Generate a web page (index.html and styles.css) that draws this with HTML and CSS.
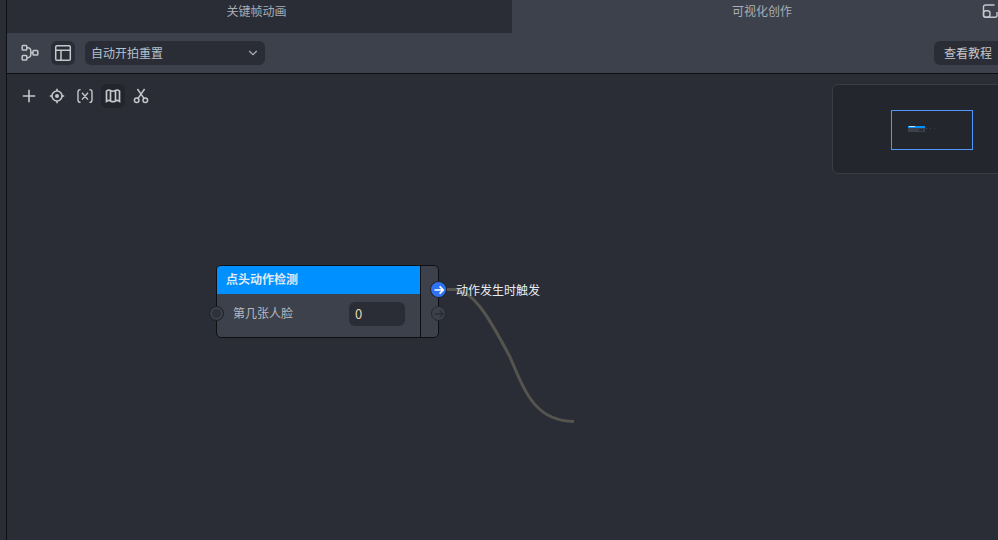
FILE: index.html
```html
<!DOCTYPE html>
<html lang="zh">
<head>
<meta charset="utf-8">
<title>可视化创作</title>
<link rel="stylesheet" href="styles.css">
</head>
<body>
<div class="app">
  <div class="strip"></div>
  <main class="main">
    <div class="tabs">
      <div class="tab tab-a">关键帧动画</div>
      <div class="tab tab-b">可视化创作</div>
      <svg class="tab-icon" width="16" height="16" viewBox="0 0 16 16" fill="none" stroke="#c4c7cc" stroke-width="1.4">
        <path d="M12.5 1H3.5A2 2 0 0 0 1.5 3V11.2A2 2 0 0 0 3.5 13.2H13A2 2 0 0 0 15 11.2V8"/>
        <rect x="1.5" y="6.8" width="6.5" height="6.4" rx="2.4"/>
      </svg>
    </div>
    <div class="toolbar">
      <div class="tool-btn">
        <svg width="18" height="18" viewBox="0 0 18 18" fill="none" stroke="#c4c7cc" stroke-width="1.5">
          <rect x="1.2" y="1.4" width="4.6" height="4.6" rx=".8"/>
          <rect x="1.2" y="11.4" width="4.6" height="4.6" rx=".8"/>
          <rect x="12" y="6.4" width="4.8" height="4.6" rx=".8"/>
          <path d="M5.8 3.7H6.8A3 3 0 0 1 9.8 6.7V10.7A3 3 0 0 1 6.8 13.7H5.8M9.8 8.7H12"/>
        </svg>
      </div>
      <div class="tool-btn tool-btn-on">
        <svg width="18" height="18" viewBox="0 0 18 18" fill="none" stroke="#c4c7cc" stroke-width="1.5">
          <rect x="1.7" y="1.7" width="14.6" height="14.6" rx="1.2"/>
          <path d="M1.7 6.2H16.3M7 6.2V16.3"/>
        </svg>
      </div>
      <div class="select">
        <span>自动开拍重置</span>
        <svg width="10" height="6" viewBox="0 0 10 6" fill="none" stroke="#a9adb5" stroke-width="1.3"><path d="M1.2 1L5 4.6 8.8 1"/></svg>
      </div>
      <div class="help-btn">查看教程</div>
    </div>
    <div class="canvas">
      <div class="canvas-tools">
        <div class="c-tool">
          <svg width="16" height="16" viewBox="0 0 16 16" fill="none" stroke="#c4c7cc" stroke-width="1.6"><path d="M8 1.8V14.2M1.8 8H14.2"/></svg>
        </div>
        <div class="c-tool">
          <svg width="16" height="16" viewBox="0 0 16 16" fill="none" stroke="#c4c7cc" stroke-width="1.6"><circle cx="8" cy="8" r="5"/><circle cx="8" cy="8" r="2" fill="#c4c7cc" stroke="none"/><path d="M8 .8V3M8 13V15.2M.8 8H3M13 8H15.2"/></svg>
        </div>
        <div class="c-tool">
          <svg width="16" height="16" viewBox="0 0 16 16" fill="none" stroke="#c4c7cc" stroke-width="1.4"><path d="M3.6 1.6H3.2C1.8 1.6 1 2.6 1 4V12C1 13.4 1.8 14.4 3.2 14.4H3.6M12.4 1.6H12.8C14.2 1.6 15 2.6 15 4V12C15 13.4 14.2 14.4 12.8 14.4H12.4M5 4.8L11 11.6M11 4.8L5 11.6"/></svg>
        </div>
        <div class="c-tool c-tool-on">
          <svg width="16" height="16" viewBox="0 0 16 16" fill="none" stroke="#c4c7cc" stroke-width="1.7"><path d="M1.5 3.2C3.5 1.6 4 1.8 5.5 2.6C7 3.4 9 3.4 10.5 2.6C12 1.8 12.5 1.6 14.5 3.2V13.4C12.5 12 12 12 10.5 12.9C9 13.8 7 13.8 5.5 12.9C4 12 3.5 12 1.5 13.4ZM5.5 2.6V12.9M10.5 2.6V12.9"/></svg>
        </div>
        <div class="c-tool">
          <svg width="16" height="16" viewBox="0 0 16 16" fill="none" stroke="#c4c7cc" stroke-width="1.5"><circle cx="3.7" cy="12.3" r="2.3"/><circle cx="12.3" cy="12.3" r="2.3"/><path d="M5 10.4L11.6 1M11 10.4L4.4 1"/></svg>
        </div>
      </div>

      <svg class="wire" width="140" height="140" viewBox="0 0 140 140" fill="none">
        <path d="M7 2.5H14C34 2.5 52 36 70 70C85 105 95 134 134 134.5" stroke="#55544f" stroke-width="3"/>
      </svg>

      <div class="node">
        <div class="node-body">
          <div class="node-head">点头动作检测</div>
          <div class="node-row">
            <span class="node-label">第几张人脸</span>
            <div class="node-input">0</div>
          </div>
        </div>
        <div class="node-side"></div>
        <span class="port port-in"></span>
        <span class="port port-fire">
          <svg width="12" height="12" viewBox="0 0 12 12" fill="none" stroke="#fff" stroke-width="1.7"><path d="M1.5 6H10M6.6 2.4L10.2 6 6.6 9.6"/></svg>
        </span>
        <span class="port port-out">
          <svg width="12" height="12" viewBox="0 0 12 12" fill="none" stroke="#2b2e36" stroke-width="1.4"><path d="M1.5 6H10M6.6 2.4L10.2 6 6.6 9.6"/></svg>
        </span>
        <span class="port-label">动作发生时触发</span>
      </div>

      <div class="minimap">
        <div class="mini-view">
          <div class="mini-node"></div>
        </div>
      </div>
    </div>
  </main>
</div>
</body>
</html>
```

FILE: styles.css
```css
* { box-sizing: border-box; }
html, body { margin: 0; height: 100%; overflow: hidden; }
body {
  background: #2a2d35;
  color: #c4c7cc;
  font: 12px/1.4 "Noto Sans CJK SC", "Noto Sans", sans-serif;
}
.app { display: flex; width: 998px; height: 540px; overflow: hidden; }
.strip { flex: 0 0 7px; border-right: 1px solid #0e0f12; background: #2a2d35; }
.main { flex: 1; min-width: 0; display: flex; flex-direction: column; }

.tabs { flex: 0 0 33px; display: flex; position: relative; background: #3d414c; overflow: hidden; }
.tab { height: 33px; flex: none; padding-top: 2px; line-height: 17px; color: #a9adb5; text-align: center; }
.tab-a { width: 505px; background: #2a2d35; padding-right: 6px; }
.tab-b { width: 500px; }
.tab-icon { position: absolute; right: 0; top: 4px; }

.toolbar {
  flex: 0 0 41px;
  display: flex;
  align-items: center;
  padding: 0 0 1px 11px;
  gap: 9px;
  background: #3d414c;
  border-bottom: 1px solid #0e0f12;
}
.tool-btn {
  width: 24px; height: 24px;
  flex: none;
  display: flex; align-items: center; justify-content: center;
  border-radius: 6px;
}
.tool-btn-on { background: #2a2d35; }
.select {
  width: 180px; height: 24px;
  margin-left: 1px;
  padding: 1px 7px 0 6px;
  display: flex; align-items: center; justify-content: space-between;
  background: #2a2d35;
  border-radius: 6px;
  color: #b4c0cc;
}
.help-btn {
  margin-left: auto;
  height: 24px;
  width: 70px;
  flex: none;
  margin-right: -6px;
  padding-left: 10px;
  line-height: 24px;
  background: #2a2d35;
  border-radius: 6px;
  white-space: nowrap;
}

.canvas { flex: 1; position: relative; background: #2a2d35; overflow: hidden; }
.canvas-tools {
  position: absolute; left: 10px; top: 10px;
  display: flex; gap: 4px;
}
.c-tool {
  width: 24px; height: 24px;
  display: flex; align-items: center; justify-content: center;
  border-radius: 6px;
}
.c-tool-on { background: #22252c; }

.node {
  position: absolute; left: 209px; top: 191px;
  width: 223px; height: 73px;
  display: flex;
  background: #3d414c;
  border: 1px solid #0e0f12;
  border-radius: 5px;
}
.node-body { width: 203px; display: flex; flex-direction: column; }
.node-head {
  height: 28px;
  padding-left: 9px;
  line-height: 26px;
  background: #0090ff;
  border-top-left-radius: 4px;
  font-weight: 700;
  color: #dfeaf5;
}
.node-row {
  flex: 1;
  display: flex; align-items: center; justify-content: space-between;
  padding: 0 15px 4px 16px;
  color: #b7bac0;
}
.node-input {
  width: 56px; height: 24px;
  padding-left: 6px;
  line-height: 24px;
  background: #2a2d35;
  border-radius: 6px;
  color: #e3d6b0;
  font-size: 13px;
}
.node-side { flex: 1; border-left: 1px solid #0e0f12; }
.port {
  position: absolute;
  width: 15px; height: 15px;
  border-radius: 50%;
  display: flex; align-items: center; justify-content: center;
}
.port-in { left: -8px; top: 40px; background: #2f323a; border: 1px solid #1f2126; box-shadow: inset 0 0 0 2px #3d414c; }
.port-fire { right: -8px; top: 16px; background: #2f73f5; box-shadow: 0 0 0 1px #23262e; }
.port-out { right: -8px; top: 40px; background: #3d414c; border: 1px solid #23262e; }
.port-label {
  position: absolute; left: 239px; top: 15px;
  line-height: 17px;
  white-space: nowrap;
  color: #e8ecf2;
}
.wire { position: absolute; left: 433px; top: 213px; }

.minimap {
  position: absolute; left: 825px; top: 10px;
  width: 180px; height: 90px;
  background: #23262d;
  border: 1px solid #3a3d46;
  border-radius: 6px;
}
.mini-view {
  position: absolute; left: 58px; top: 25px;
  width: 82px; height: 40px;
  border: 1px solid #4f97ff;
}
.mini-node {
  position: absolute; left: 16px; top: 15px;
  width: 17px; height: 6px;
  background:
    linear-gradient(#0090ff 2px, transparent 2px),
    linear-gradient(#2a2d35, #2a2d35) 11px 3px / 4px 2px no-repeat,
    #3d414c;
}
.mini-node::before {
  content: "";
  position: absolute; left: 1px; top: 0;
  width: 6px; height: 1px;
  background: #bfe2ff;
}
.mini-node::after {
  content: "";
  position: absolute; left: 18px; top: 2px;
  width: 1px; height: 1px;
  background: #55544f;
  box-shadow: 4px 0 #44444a, 8px 0 #3a3c42;
}
```
